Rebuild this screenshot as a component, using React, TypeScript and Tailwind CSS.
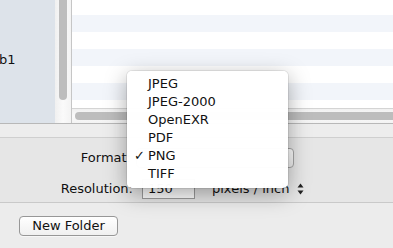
import React from 'react';

const formats = ['JPEG', 'JPEG-2000', 'OpenEXR', 'PDF', 'PNG', 'TIFF'];

export default function App() {
    const rows = [0, 1, 2, 3, 4, 5];

    return (
        <div className="relative h-[248px] w-[393px] overflow-hidden bg-[#ececec] font-['DejaVu_Sans',sans-serif] text-[13px] text-[#111]">
            {/* Browser area */}
            <div className="flex h-[123px]">
                <div className="w-[55px] overflow-hidden bg-[#dde3ea] pt-[51px]">
                    <div className="-ml-[1px] whitespace-nowrap leading-[18px]">b1</div>
                </div>

                {/* Vertical scroller */}
                <div className="flex w-[16px] justify-center bg-gradient-to-r from-[#f0f0f0] via-[#fafafa] to-[#f3f3f3]">
                    <div className="h-[100px] w-[8px] rounded-b-[4px] bg-[#bdbdbd]" />
                </div>

                <div className="flex flex-1 flex-col border-l border-[#c6c6c6]">
                    <div className="flex flex-1 flex-col overflow-hidden bg-white">
                        <div className="h-[15px] shrink-0" />
                        {rows.map(i => (
                            <div
                                key={i}
                                className={
                                    i % 2 === 0
                                        ? 'h-[17px] shrink-0 bg-[#f2f5fa]'
                                        : 'h-[17px] shrink-0 bg-white'
                                }
                            />
                        ))}
                    </div>
                    {/* Horizontal scroller */}
                    <div className="flex h-[15px] items-center border-t border-[#d4d4d4] bg-gradient-to-b from-[#f0f0f0] via-[#fafafa] to-[#f3f3f3] pl-[3px]">
                        <div className="h-[8px] flex-1 -mr-[10px] rounded-[4px] bg-[#bdbdbd]" />
                    </div>
                </div>
            </div>

            {/* Band */}
            <div className="h-[14px] border-t border-[#b8b8b8] bg-[#ededed]" />

            {/* Accessory view */}
            <div className="flex h-[65px] flex-col border-t border-[#cfcfcf] bg-[#e6e6e6] pt-[10px]">
                <div className="flex h-[20px] items-center">
                    <div className="w-[131px] text-right">Format:</div>
                    <div className="ml-[5px] h-[20px] w-[158px] rounded-[4px] border border-[#a5a5a5] bg-gradient-to-b from-white to-[#eeeeee]" />
                </div>
                <div className="mt-[11px] flex h-[20px] items-center">
                    <div className="w-[133px] text-right">Resolution:</div>
                    <div className="ml-[9px] flex h-[20px] w-[53px] items-center border border-[#9d9d9d] bg-white pl-[5px]">
                        150
                    </div>
                    <div className="ml-[17px]">pixels / inch</div>
                    <svg
                        className="ml-[8px]"
                        width="7"
                        height="12"
                        viewBox="0 0 7 12"
                        aria-hidden="true">
                        <path d="M3.5 0.5L6.5 4.5H0.5z" fill="#222" />
                        <path d="M3.5 11.5L6.5 7.5H0.5z" fill="#222" />
                    </svg>
                </div>
            </div>

            {/* Bottom bar */}
            <div className="border-t border-[#c9c9c9] bg-[#ececec] pl-[19px] pt-[13px]">
                <button className="h-[20px] w-[99px] rounded-[4px] border border-[#979797] bg-gradient-to-b from-white to-[#f0f0f0] leading-[18px] shadow-[0_1px_0_rgba(255,255,255,0.6)]">
                    New Folder
                </button>
            </div>

            {/* Format popup menu */}
            <div className="absolute left-[127px] top-[71px] w-[161px] rounded-[5px] bg-white/[0.98] pb-[5px] pt-[4px] shadow-[0_6px_22px_rgba(0,0,0,0.35),0_0_0_1px_rgba(0,0,0,0.08)]">
                {formats.map(name => (
                    <div key={name} className="relative h-[18px] pl-[21px] leading-[18px]">
                        {name === 'PNG' && (
                            <span className="absolute left-[7px] top-0">✓</span>
                        )}
                        {name}
                    </div>
                ))}
            </div>
        </div>
    );
}
